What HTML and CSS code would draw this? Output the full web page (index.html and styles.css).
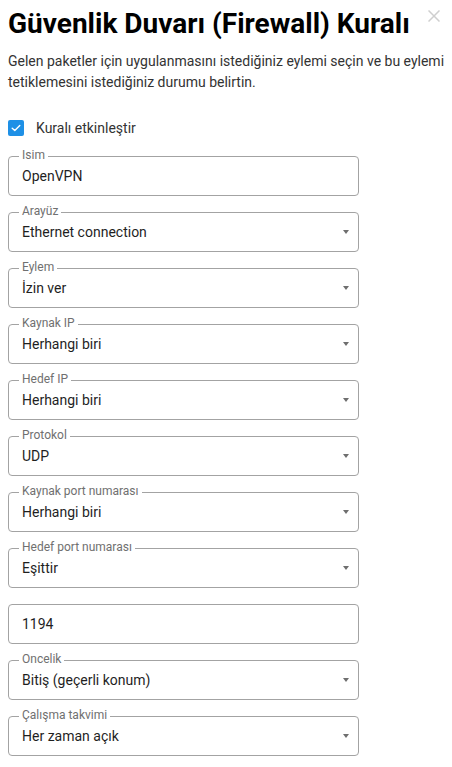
FILE: index.html
```html
<!DOCTYPE html>
<html lang="tr">
<head>
<meta charset="utf-8">
<title>Güvenlik Duvarı (Firewall) Kuralı</title>
<link rel="stylesheet" href="styles.css">
</head>
<body>
<div class="dialog">
  <div class="header">
    <h1 class="title">Güvenlik Duvarı (Firewall) Kuralı</h1>
    <button class="close" aria-label="Kapat">
      <svg width="12" height="12" viewBox="0 0 12 12"><path d="M0.5 0.5 L11.5 11.5 M11.5 0.5 L0.5 11.5" stroke="#cfcfcf" stroke-width="1.5" fill="none"/></svg>
    </button>
  </div>
  <p class="desc">Gelen paketler için uygulanmasını istediğiniz eylemi seçin ve bu eylemi tetiklemesini istediğiniz durumu belirtin.</p>

  <label class="check-row">
    <span class="checkbox">
      <svg width="16" height="16" viewBox="0 0 16 16"><path d="M4.2 8.2 L6.8 10.6 L11.8 5.6" stroke="#fff" stroke-width="1.4" fill="none" stroke-linecap="round" stroke-linejoin="round"/></svg>
    </span>
    <span class="check-label">Kuralı etkinleştir</span>
  </label>

  <div class="form">
    <fieldset class="field">
      <legend class="field-label">Isim</legend>
      <div class="field-row"><span class="value">OpenVPN</span></div>
    </fieldset>
    <fieldset class="field">
      <legend class="field-label">Arayüz</legend>
      <div class="field-row"><span class="value">Ethernet connection</span><span class="arrow"></span></div>
    </fieldset>
    <fieldset class="field">
      <legend class="field-label">Eylem</legend>
      <div class="field-row"><span class="value">İzin ver</span><span class="arrow"></span></div>
    </fieldset>
    <fieldset class="field">
      <legend class="field-label">Kaynak IP</legend>
      <div class="field-row"><span class="value">Herhangi biri</span><span class="arrow"></span></div>
    </fieldset>
    <fieldset class="field">
      <legend class="field-label">Hedef IP</legend>
      <div class="field-row"><span class="value">Herhangi biri</span><span class="arrow"></span></div>
    </fieldset>
    <fieldset class="field">
      <legend class="field-label">Protokol</legend>
      <div class="field-row"><span class="value">UDP</span><span class="arrow"></span></div>
    </fieldset>
    <fieldset class="field">
      <legend class="field-label">Kaynak port numarası</legend>
      <div class="field-row"><span class="value">Herhangi biri</span><span class="arrow"></span></div>
    </fieldset>
    <fieldset class="field">
      <legend class="field-label">Hedef port numarası</legend>
      <div class="field-row"><span class="value">Eşittir</span><span class="arrow"></span></div>
    </fieldset>
    <div class="plain-field">
      <span class="value">1194</span>
    </div>
    <fieldset class="field">
      <legend class="field-label">Oncelik</legend>
      <div class="field-row"><span class="value">Bitiş (geçerli konum)</span><span class="arrow"></span></div>
    </fieldset>
    <fieldset class="field">
      <legend class="field-label">Çalışma takvimi</legend>
      <div class="field-row"><span class="value">Her zaman açık</span><span class="arrow"></span></div>
    </fieldset>
  </div>
</div>
</body>
</html>
```

FILE: styles.css
```css
html, body {
  margin: 0;
  padding: 0;
  background: #fff;
}

body {
  font-family: Roboto, "Liberation Sans", sans-serif;
  color: #212121;
}

.dialog {
  padding: 8px;
  width: 436px;
}

.header {
  display: flex;
  justify-content: space-between;
  align-items: flex-start;
}

.title {
  margin: 0;
  font-size: 28px;
  line-height: 32px;
  font-weight: 700;
  color: #000;
  white-space: nowrap;
}

.close {
  margin: 2px 4px 0 0;
  padding: 0;
  border: 0;
  background: none;
  width: 12px;
  height: 12px;
  display: flex;
}

.desc {
  margin: 11px -6px 0 0;
  font-size: 14px;
  line-height: 21px;
  color: #333;
}

.check-row {
  display: flex;
  align-items: center;
  margin-top: 27px;
  height: 16px;
}

.checkbox {
  width: 16px;
  height: 16px;
  border-radius: 2px;
  background: #1e90e6;
  display: flex;
}

.check-label {
  margin-left: 12px;
  font-size: 14px;
  line-height: 16px;
  color: #333;
}

.form {
  display: flex;
  flex-direction: column;
  width: 351px;
  margin-top: 13px;
}

.field {
  margin: 0;
  padding: 2px 9px 9px 13px;
  border: 1px solid #a3a3a3;
  border-radius: 4px;
  min-width: 0;
}

.field + .field,
.plain-field + .field {
  margin-top: 9px;
}

.field-label {
  margin-left: -3px;
  padding: 0 3px 2px;
  font-size: 12px;
  line-height: 13px;
  color: #707070;
}

.field-row {
  display: flex;
  align-items: center;
  height: 20px;
}

.value {
  flex: 1;
  font-size: 14px;
  line-height: 20px;
  color: #1f1f1f;
}

.arrow {
  width: 0;
  height: 0;
  border-left: 3px solid transparent;
  border-right: 3px solid transparent;
  border-top: 4px solid #6e6e6e;
}

.plain-field {
  margin-top: 16px;
  border: 1px solid #a3a3a3;
  border-radius: 4px;
  height: 38px;
  padding: 0 9px 0 13px;
  display: flex;
  align-items: center;
}
```
